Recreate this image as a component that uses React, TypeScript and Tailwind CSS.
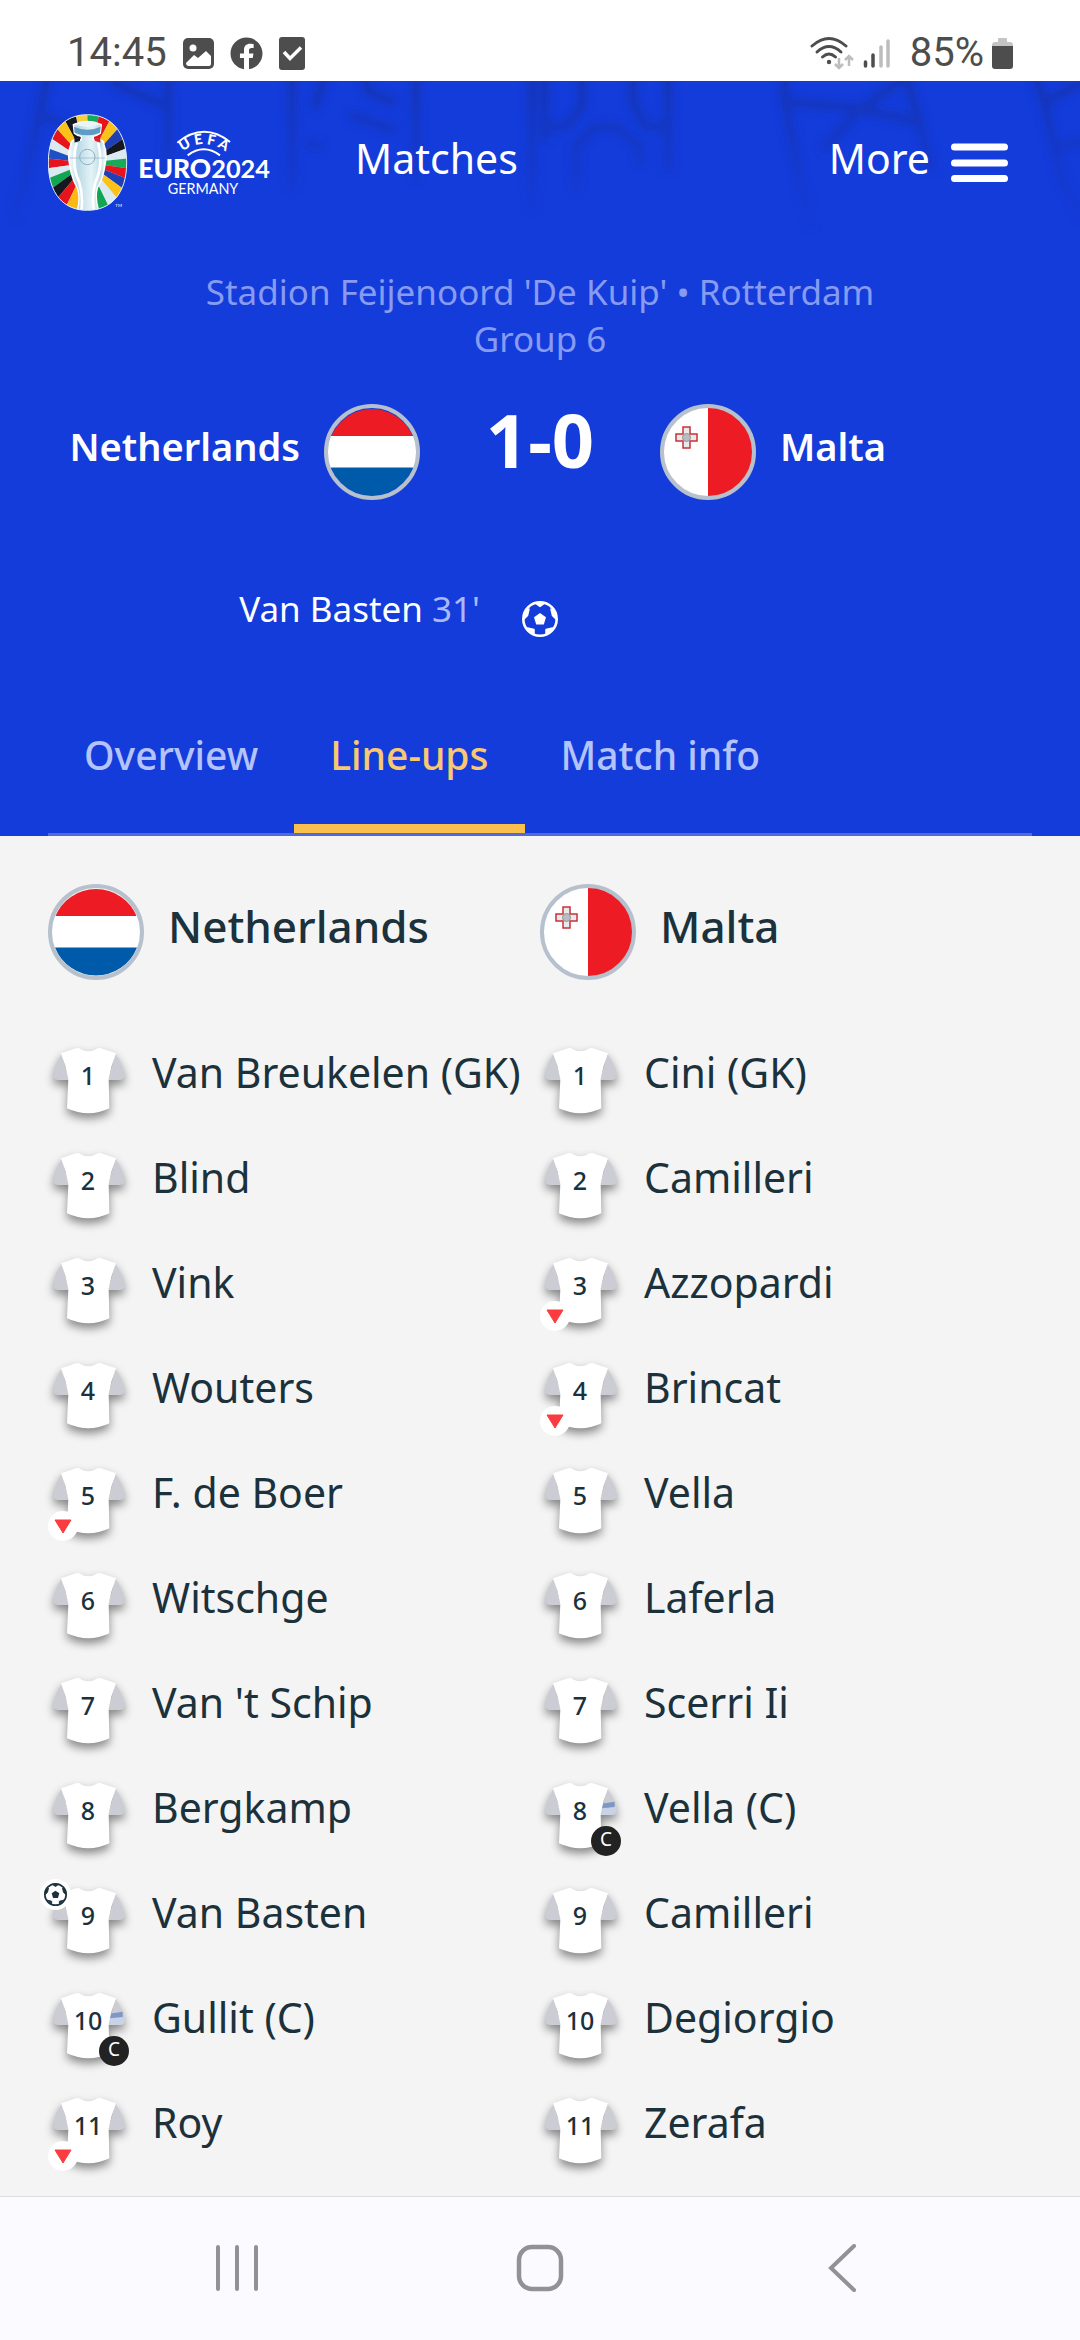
import React from 'react';
import { FaFacebook } from 'react-icons/fa';

type Player = {
  number: number;
  name: string;
  captain?: boolean;
  goal?: boolean;
  off?: boolean;
};

const netherlands: Player[] = [
  { number: 1, name: 'Van Breukelen (GK)' },
  { number: 2, name: 'Blind' },
  { number: 3, name: 'Vink' },
  { number: 4, name: 'Wouters' },
  { number: 5, name: 'F. de Boer', off: true },
  { number: 6, name: 'Witschge' },
  { number: 7, name: "Van 't Schip" },
  { number: 8, name: 'Bergkamp' },
  { number: 9, name: 'Van Basten', goal: true },
  { number: 10, name: 'Gullit (C)', captain: true },
  { number: 11, name: 'Roy', off: true },
];

const malta: Player[] = [
  { number: 1, name: 'Cini (GK)' },
  { number: 2, name: 'Camilleri' },
  { number: 3, name: 'Azzopardi', off: true },
  { number: 4, name: 'Brincat', off: true },
  { number: 5, name: 'Vella' },
  { number: 6, name: 'Laferla' },
  { number: 7, name: 'Scerri Ii' },
  { number: 8, name: 'Vella (C)', captain: true },
  { number: 9, name: 'Camilleri' },
  { number: 10, name: 'Degiorgio' },
  { number: 11, name: 'Zerafa' },
];

const tabs = ['Overview', 'Line-ups', 'Match info'];

const right = ['#18a95a', '#e8141c', '#fdc21a', '#1f3fb5', '#17171f', '#dbeaf0', '#18a95a', '#e8141c', '#1f3fb5', '#fdc21a', '#dbeaf0', '#12a552'];
const left = ['#f5cf3c', '#17171f', '#fdc21a', '#e8141c', '#dbeaf0', '#1f4fc4', '#e8141c', '#dbeaf0', '#12a552', '#17171f', '#e8141c', '#fdb913'];

const point = (deg: number) => {
  const a = (deg * Math.PI) / 180;
  return `${172 + Math.sin(a) * 220} ${186 - Math.cos(a) * 220}`;
};

const EuroLogo = () => (
  <svg viewBox="54 40 666 291" className="h-[97px] w-[222px] shrink-0" role="img" aria-label="UEFA EURO 2024 Germany">
    <defs>
      <clipPath id="badge">
        <path d="M172 42C242 42 290 92 290 186S242 329 172 329 55 280 55 186 102 42 172 42Z" />
      </clipPath>
      <linearGradient id="silver" x1="0" x2="1">
        <stop offset="0" stopColor="#ffffff" />
        <stop offset="0.25" stopColor="#b9d9e6" />
        <stop offset="0.6" stopColor="#e4f3f7" />
        <stop offset="0.85" stopColor="#c2dde8" />
        <stop offset="1" stopColor="#ffffff" />
      </linearGradient>
      <path id="arc" d="M448 160Q521 100 596 160" />
    </defs>
    <g clipPath="url(#badge)">
      <rect x="50" y="38" width="245" height="296" fill="#cfe6ee" />
      {right.map((color, key) => (
        <path key={`r${key}`} d={`M172 186L${point(key * 14)}L${point(key * 14 + 14)}Z`} fill={color} />
      ))}
      {left.map((color, key) => (
        <path key={`l${key}`} d={`M172 186L${point(-key * 14)}L${point(-key * 14 - 14)}Z`} fill={color} />
      ))}
      <path d="M130 72Q172 52 214 72L211 98Q200 106 190 107V118Q222 112 222 132Q232 155 226 188Q220 232 202 262Q194 290 206 331H142Q152 290 142 262Q124 232 118 188Q112 155 122 132Q122 112 154 118V107Q140 105 133 98Z" fill="url(#silver)" stroke="#fff" strokeWidth="4" />
      <path d="M132 78Q172 96 212 78L210 96Q172 112 134 96Z" fill="#5f9cc4" />
      <path d="M132 70Q172 58 212 70Q172 88 132 70Z" fill="#e9f5f9" />
      <path d="M133 113H150V120L134 126Z" fill="#17171f" />
      <path d="M193 113H211V126L194 120Z" fill="#d9252a" />
      <path d="M140 126Q122 190 148 245Q160 285 154 331M204 126Q222 190 196 245Q184 285 192 331" fill="none" stroke="#fff" strokeWidth="8" />
      <circle cx="172" cy="169" r="23" fill="none" stroke="#8eb2c3" strokeWidth="3" />
      <path d="M118 172H226" stroke="#8eb2c3" strokeWidth="2" />
    </g>
    <path d="M172 42C242 42 290 92 290 186S242 329 172 329 55 280 55 186 102 42 172 42Z" fill="none" stroke="#dcebf5" strokeWidth="3" />
    <g fill="none" stroke="#fff" strokeWidth="6">
      <path d="M442 126Q521 62 600 124" />
      <path d="M473 164Q521 128 570 164" />
    </g>
    <g fill="#fff">
      <text fontFamily="Lato" fontWeight="900" fontSize="43">
        <textPath href="#arc" startOffset="50%" textAnchor="middle">U E F A</textPath>
      </text>
      <text x="325" y="233" fontFamily="Lato" fontWeight="900" fontSize="79">
        EURO<tspan fontWeight="700" fontSize="76">2024</tspan>
      </text>
      <text x="519" y="280" fontFamily="Lato" fontSize="43" textAnchor="middle">GERMANY</text>
      <text x="256" y="318" fontFamily="Lato" fontSize="13">TM</text>
    </g>
  </svg>
);

const HeaderPattern = () => (
  <svg viewBox="0 0 1080 160" preserveAspectRatio="none" className="absolute inset-x-0 top-0 h-40 w-full" aria-hidden="true">
    <defs>
      <filter id="soft" x="-5%" y="-10%" width="110%" height="120%">
        <feGaussianBlur stdDeviation="4" />
      </filter>
      <linearGradient id="fade" x1="0" x2="0" y1="0" y2="1">
        <stop offset="0" stopColor="#fff" stopOpacity="0.8" />
        <stop offset="0.5" stopColor="#fff" stopOpacity="0.4" />
        <stop offset="1" stopColor="#fff" stopOpacity="0" />
      </linearGradient>
      <mask id="fadeMask">
        <rect width="1080" height="160" fill="url(#fade)" />
      </mask>
    </defs>
    <g mask="url(#fadeMask)">
      <g filter="url(#soft)" fill="none" stroke="#1230a8" strokeWidth="8">
        <path d="M48 -8L36 50L14 140M40 34L76 48M110 0L162 24M168 -8V90" />
        <path d="M292 -8V110M326 -8L314 28M362 -8L370 12L396 22M350 34L396 50M416 -8V100M532 -8V130M306 60L322 68" />
        <path d="M545 -8V60M582 -8V26L566 46H548M633 -8V22L646 46H668M668 -8V90M576 110V66L594 46H616L640 66V84" />
        <path d="M785 -8V20L796 80L812 150M785 21L855 27L918 41M906 -4L858 30L822 70M906 -8L920 44L932 90" />
        <path d="M1034 -8L1044 20L1062 100L1084 140M1044 22L1084 0M1060 66L1084 60" />
      </g>
    </g>
  </svg>
);

const DutchFlag = () => (
  <svg viewBox="0 0 96 96" className="size-24 shrink-0" role="img" aria-label="Netherlands flag">
    <path d="M7 33A44 44 0 0 1 89 33Z" fill="#ed1c24" />
    <rect x="4" y="32" width="88" height="32" fill="#fff" />
    <path d="M7 63.500A44 44 0 0 0 89 63.500Z" fill="#005aaa" />
    <circle cx="48" cy="48" r="46" fill="none" stroke="#b6c1cd" strokeWidth="4" />
  </svg>
);

const MalteseFlag = () => (
  <svg viewBox="0 0 96 96" className="size-24 shrink-0" role="img" aria-label="Malta flag">
    <circle cx="48" cy="48" r="45" fill="#fff" />
    <path d="M48 3A45 45 0 0 1 48 93Z" fill="#ed1c24" />
    <path d="M23 23H30V30H37V37H30V44H23V37H16V30H23Z" fill="#e9e9e9" stroke="#c8323a" strokeWidth="1.500" />
    <circle cx="26.500" cy="33.500" r="4" fill="#b9bdbf" stroke="#8d9396" />
    <circle cx="48" cy="48" r="46" fill="none" stroke="#b6c1cd" strokeWidth="4" />
  </svg>
);

const Ball: React.FC<{ className: string }> = ({ className }) => (
  <svg viewBox="0 0 36 36" className={className} aria-hidden="true">
    <circle cx="18" cy="18" r="16.700" fill="none" stroke="currentColor" strokeWidth="2.600" />
    <path d="M18 12L24 16.200L21.800 23.500H14.200L12 16.200Z" fill="currentColor" />
    <path d="M13 2L18 5.500L23 2ZM2 12V18L5.500 14.500L7 8ZM34 12V18L30.500 14.500L29 8ZM5.500 27L12 33L12 28.500ZM30.500 27L24 33L24 28.500Z" fill="currentColor" stroke="currentColor" strokeWidth="1.500" strokeLinejoin="round" />
  </svg>
);

const Shirt: React.FC<{ player: Player }> = ({ player }) => (
  <div className="relative h-[72px] w-20 shrink-0">
    <svg viewBox="54 78 240 216" className="h-full w-full overflow-visible drop-shadow-[0_5px_5px_rgba(0,0,0,0.45)]" aria-hidden="true">
      <path d="M95 105Q75 130 70 172Q71 182 84 183H118Z" fill="#cccdd4" />
      <path d="M256 105Q277 130 284 172Q283 182 270 183H234Z" fill="#cccdd4" />
      {player.captain && (
        <>
          <path d="M236 163L282 157L284 172Q283 182 270 183H234Z" fill="#c9d3e6" />
          <path d="M238 149L278 143V159L240 163Z" fill="#7f97c4" />
        </>
      )}
      <path d="M93 103L138 88Q148 85 155 92Q175 102 195 92Q203 85 213 88L258 103Q243 140 236 180L238 268Q176 298 111 268L115 180Q108 140 93 103Z" fill="#fff" />
    </svg>
    <div className="absolute inset-x-0 top-0 text-center text-[25px] leading-[60px] font-medium">{player.number}</div>
    {player.goal && (
      <div className="absolute -top-1.5 -left-2 flex size-[31px] items-center justify-center rounded-full bg-white">
        <Ball className="size-[23px]" />
      </div>
    )}
    {player.off && (
      <div className="absolute top-[46px] left-0 flex size-[30px] items-center justify-center rounded-full bg-white">
        <svg viewBox="0 0 18 15" className="h-[15px] w-[18px]" role="img" aria-label="Substituted">
          <path d="M1 1H17L9 14Z" fill="#fb3b3f" stroke="#fb3b3f" strokeLinejoin="round" />
        </svg>
      </div>
    )}
    {player.captain && (
      <div className="absolute top-[46px] left-[51px] size-[30px] rounded-full bg-[#222222] text-center text-[19px] leading-[26px] text-white">C</div>
    )}
  </div>
);

const LineUp: React.FC<{ team: string; flag: React.ReactNode; players: Player[] }> = ({ team, flag, players }) => (
  <section>
    <div className="flex items-start gap-5">
      {flag}
      <h2 className="pl-1 text-[44px] leading-[84px] font-medium">{team}</h2>
    </div>
    <ul className="mt-[65px] flex flex-col gap-[33px]">
      {players.map((player, key) => (
        <li className="flex items-start gap-6" key={key}>
          <Shirt player={player} />
          <div className="text-[41px] leading-[54px] whitespace-nowrap">{player.name}</div>
        </li>
      ))}
    </ul>
  </section>
);

const StatusBar = () => (
  <div className="flex h-[81px] items-center justify-between bg-white px-[67px] pt-[25px] font-[Roboto] text-[40px] leading-[56px] text-[#4d4d4d]">
    <div className="flex items-center gap-4">
      <span>14:45</span>
      <svg viewBox="0 0 31 31" className="size-[31px]" aria-hidden="true">
        <rect width="31" height="31" rx="5" fill="#4d4d4d" />
        <circle cx="10" cy="10" r="3.500" fill="#fff" />
        <path d="M4 24L11 17L15 20L23 13L28 18V26Q28 28 26 28H6Q3 28 3 25Z" fill="#fff" />
      </svg>
      <FaFacebook className="size-[33px]" />
      <svg viewBox="0 0 26 33" className="h-[33px] w-[26px]" aria-hidden="true">
        <rect width="26" height="33" rx="3" fill="#4d4d4d" />
        <path d="M5 15L11 21.500L22 10.500" fill="none" stroke="#fff" strokeWidth="3.500" />
      </svg>
    </div>
    <div className="flex items-center">
      <svg viewBox="0 0 80 34" className="mr-5 h-[34px] w-20" aria-hidden="true">
        <g fill="none" stroke="#4d4d4d" strokeWidth="3" strokeLinecap="round">
          <path d="M2 10Q19 -5 36 10" />
          <path d="M7 16Q19 5 31 16" />
          <path d="M12.500 21Q19 15 25.500 21" />
        </g>
        <circle cx="19" cy="26" r="2.200" fill="#4d4d4d" />
        <path d="M29 22V32M25 28L29 32L33 28M39 30V20M35 24L39 20L43 24" fill="none" stroke="#bdbdbd" strokeWidth="2.500" />
        <path d="M55.500 26V30M63 19V30" stroke="#4d4d4d" strokeWidth="3.500" strokeLinecap="round" />
        <path d="M71 11V30M78 5V30" stroke="#bdbdbd" strokeWidth="3.500" strokeLinecap="round" />
      </svg>
      <span className="mr-2">85%</span>
      <svg viewBox="0 0 21 31" className="h-[31px] w-[21px]" aria-hidden="true">
        <path d="M6 1Q6 0 7 0H14Q15 0 15 1V4H18Q21 4 21 7V10H0V7Q0 4 3 4H6Z" fill="#c4c4c4" />
        <path d="M0 8H21V28Q21 31 18 31H3Q0 31 0 28Z" fill="#4d4d4d" />
      </svg>
    </div>
  </div>
);

const MatchHeader = () => (
  <header className="relative bg-[#143cdb] text-white">
    <HeaderPattern />
    <div className="relative">
      <div className="flex items-start pt-[33px] pr-[72px] pl-12">
        <EuroLogo />
        <a href="#matches" className="ml-[85px] text-[41px] leading-[88px]">Matches</a>
        <button type="button" className="ml-auto flex items-start gap-[21px] text-[41px] leading-[88px]">
          More
          <svg viewBox="0 0 57 97" className="h-[97px] w-[57px]" aria-hidden="true">
            <path d="M3.500 33H53.500M3.500 49H53.500M3.500 64.500H53.500" stroke="#fff" strokeWidth="7" strokeLinecap="round" />
          </svg>
        </button>
      </div>
      <div className="mt-[57px] text-center text-[35px] leading-[47px] text-[#869bf1]">
        <p>Stadion Feijenoord 'De Kuip' • Rotterdam</p>
        <p>Group 6</p>
      </div>
      <div className="mt-[42px] grid grid-cols-[1fr_240px_1fr] items-start text-[38px] leading-[84px] font-semibold">
        <div className="flex justify-end gap-6">
          <span>Netherlands</span>
          <DutchFlag />
        </div>
        <div className="text-center text-[74px] leading-[72px] font-bold">1-0</div>
        <div className="flex gap-6">
          <MalteseFlag />
          <span>Malta</span>
        </div>
      </div>
      <div className="mt-[86px] grid grid-cols-[1fr_120px_1fr] items-start">
        <p className="text-right text-[35px] leading-[46px]">
          Van Basten <span className="text-[#a9b9f8]">31'</span>
        </p>
        <Ball className="mt-[15px] size-9 justify-self-center" />
      </div>
      <div className="mx-12 mt-[66px] flex border-b-[3px] border-[#5069db]">
        {tabs.map((tab) => (
          <button
            type="button"
            key={tab}
            className={
              tab === 'Line-ups'
                ? 'h-[130px] border-b-[9px] border-[#f9c04d] px-9 pb-[17px] text-[39px] leading-[104px] font-medium text-[#f9c871]'
                : 'h-[130px] border-b-[9px] border-transparent px-9 pb-[17px] text-[39px] leading-[104px] font-medium text-[#b5c3fb]'
            }
          >
            {tab}
          </button>
        ))}
      </div>
    </div>
  </header>
);

const SystemNav = () => (
  <nav className="grid h-36 grid-cols-3 items-center justify-items-center border-t border-[#dedee2] bg-[#fafaff] px-[85px] pb-px text-[#929296]">
    <button type="button" aria-label="Recents">
      <svg viewBox="0 0 48 48" className="size-12" fill="none" stroke="currentColor" strokeWidth="4" strokeLinecap="round">
        <path d="M5 3V45M24 3V45M43 3V45" />
      </svg>
    </button>
    <button type="button" aria-label="Home">
      <svg viewBox="0 0 48 48" className="size-12" fill="none" stroke="currentColor" strokeWidth="4.500">
        <rect x="3" y="3" width="42" height="42" rx="13" />
      </svg>
    </button>
    <button type="button" aria-label="Back">
      <svg viewBox="0 0 48 48" className="size-12" fill="none" stroke="currentColor" strokeWidth="4" strokeLinecap="round">
        <path d="M35 2L12 24L35 46" />
      </svg>
    </button>
  </nav>
);

const App: React.FC = () => {
  return (
    <div className="flex min-h-screen flex-col bg-[#f4f4f4] font-['Noto_Sans',sans-serif] text-[#1b313b]">
      <StatusBar />
      <MatchHeader />
      <main className="grid flex-1 grid-cols-2 px-12 pt-12">
        <LineUp team="Netherlands" flag={<DutchFlag />} players={netherlands} />
        <LineUp team="Malta" flag={<MalteseFlag />} players={malta} />
      </main>
      <SystemNav />
    </div>
  );
};

export default App;
